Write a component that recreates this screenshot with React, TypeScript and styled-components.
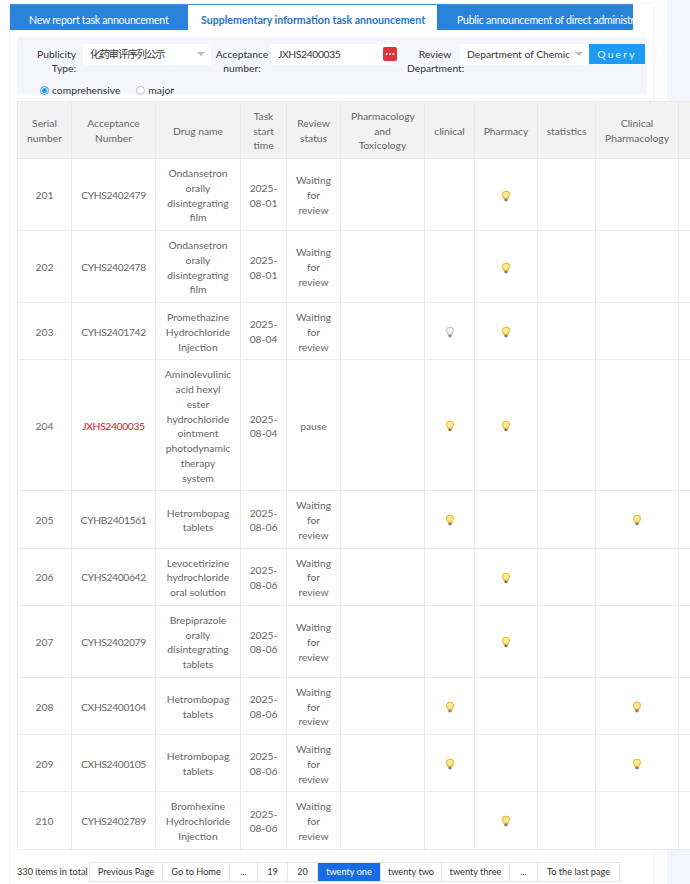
import React from 'react';
import styled, { createGlobalStyle } from 'styled-components';

const FONT = 'Lato, "Noto Sans CJK SC", sans-serif';

const GlobalStyle = createGlobalStyle`
  html, body {
    margin: 0;
    padding: 0;
    background: #fff;
    overflow: hidden;
  }
  * {
    box-sizing: border-box;
  }
`;

const Shell = styled.div`
  display: flex;
  width: 690px;
  height: 884px;
  overflow: hidden;
  font-family: ${FONT};
  font-size: 10.3px;
  color: #666;
`;

const Main = styled.div`
  width: 667px;
  flex: none;
  padding: 3px 13px 0 9px;
`;

const Aside = styled.div`
  flex: 1;
  background: #f1f6fe;
`;

const Card = styled.div`
  height: 881px;
  background: #fff;
  border: 1px solid #f0f3f8;
  border-bottom: none;
`;

const Tabs = styled.div`
  display: flex;
  width: 623px;
  height: 26px;
  border-top: 1px solid #4a90d9;
  background: #2b82d9;
  overflow: hidden;
`;

const Tab = styled.div<{ $active?: boolean; $width: number; $indent: number }>`
  flex: none;
  width: ${(p) => p.$width}px;
  padding-left: ${(p) => p.$indent}px;
  line-height: 30px;
  white-space: nowrap;
  overflow: hidden;
  font-size: 10.6px;
  font-weight: ${(p) => (p.$active ? 700 : 400)};
  letter-spacing: ${(p) => (p.$active ? '0' : '-0.27px')};
  background: ${(p) => (p.$active ? '#fff' : '#2b82d9')};
  color: ${(p) => (p.$active ? '#1c74d4' : '#fff')};
`;

const Filter = styled.div`
  margin: 7px 6px 0 7px;
  height: 57px;
  padding: 7px 2px 0 0;
  background: #f4f6fb;
  color: #333;
`;

const FilterRow = styled.div`
  display: flex;
  align-items: flex-start;
  height: 39px;
`;

const FieldLabel = styled.label<{ $width: number; $gap: number; $center?: boolean }>`
  position: relative;
  z-index: 1;
  flex: none;
  width: ${(p) => p.$width}px;
  margin-right: ${(p) => p.$gap}px;
  text-align: ${(p) => (p.$center ? 'center' : 'right')};
  line-height: 13.5px;
  padding-top: 4px;
`;

const Select = styled.div<{ $width: number }>`
  position: relative;
  flex: none;
  width: ${(p) => p.$width}px;
  height: 21px;
  padding: 0 20px 0 7px;
  background: #fff;
  border-radius: 2px;
  line-height: 21px;
`;

const SelectValue = styled.div`
  white-space: nowrap;
  overflow: hidden;
`;

const SelectArrow = styled.span`
  position: absolute;
  right: 6px;
  top: 8px;
  border-left: 4px solid transparent;
  border-right: 4px solid transparent;
  border-top: 4px solid #bbb;
`;

const CjkValue = styled.span`
  font-size: 10.5px;
  letter-spacing: -1.2px;
`;

const TextInput = styled.div`
  position: relative;
  flex: none;
  width: 129px;
  height: 21px;
  margin-right: 7px;
  padding-left: 7px;
  background: #fff;
  border-radius: 2px;
  line-height: 21px;
  letter-spacing: -0.35px;
`;

const PickerButton = styled.span`
  position: absolute;
  right: 3px;
  top: 3px;
  display: flex;
  align-items: center;
  justify-content: center;
  width: 14px;
  height: 14px;
  border-radius: 2px;
  background: #e0343c;
`;

const QueryButton = styled.button`
  flex: none;
  width: 56px;
  height: 20px;
  padding: 0;
  border: none;
  background: #1d9bf5;
  color: #e8f6ff;
  font-family: ${FONT};
  font-size: 10.3px;
  letter-spacing: 2.2px;
  line-height: 20px;
`;

const Radios = styled.div`
  display: flex;
  align-items: center;
  height: 14px;
  padding-left: 23px;
`;

const RadioOption = styled.span`
  display: flex;
  align-items: center;
  gap: 3px;
  margin-right: 16px;
`;

const RadioMark = styled.span<{ $checked?: boolean }>`
  display: flex;
  align-items: center;
  justify-content: center;
  width: 9px;
  height: 9px;
  border-radius: 50%;
  border: 1px solid ${(p) => (p.$checked ? '#1d9bf5' : '#bbb')};
  background: #fff;

  &::after {
    content: '';
    display: ${(p) => (p.$checked ? 'block' : 'none')};
    width: 5px;
    height: 5px;
    border-radius: 50%;
    background: #1d9bf5;
  }
`;

const TableFrame = styled.table`
  position: relative;
  z-index: 1;
  margin: 7px 0 0 7px;
  width: 760px;
  table-layout: fixed;
  border-collapse: collapse;
  background: #fff;
  text-align: center;
`;

const HeadCell = styled.th<{ $inset: number }>`
  padding: 7px ${(p) => p.$inset}px 5px;
  border: 1px solid #e8e8e8;
  background: #f2f2f2;
  font-weight: 400;
  line-height: 14.67px;
  color: #666;
`;

const Cell = styled.td`
  padding: 7px 8px 5px;
  border: 1px solid #ebebeb;
  line-height: 14.75px;
  color: #666;
  height: 57px;
`;

const AcceptanceNo = styled.span<{ $alert?: boolean }>`
  letter-spacing: -0.35px;
  color: ${(p) => (p.$alert ? '#d9141e' : 'inherit')};
`;

const BulbIcon = styled.svg`
  display: block;
  margin: 0 auto;
`;

const Pager = styled.div`
  display: flex;
  align-items: center;
  margin: 12px 0 0 7px;
  color: #333;
  font-size: 9.2px;
  white-space: nowrap;
`;

const PagerTotal = styled.span`
  width: 73px;
  flex: none;
`;

const PageLink = styled.span<{ $active?: boolean; $width: number }>`
  flex: none;
  width: ${(p) => p.$width}px;
  height: 20px;
  margin-left: -1px;
  line-height: 18px;
  text-align: center;
  border: 1px solid #e5e5e5;
  background: ${(p) => (p.$active ? '#1a6ce6' : '#fff')};
  color: ${(p) => (p.$active ? '#fff' : '#333')};
`;

const Bulb = ({ off }: { off?: boolean }) => (
  <BulbIcon width="8" height="12" viewBox="0 0 9 12">
    <path
      d="M4.5.6A3.9 3.9 0 0 0 .6 4.4c0 1.5.9 2.3 1.5 3.2.3.4.3.8.4 1.1h4c.1-.3.1-.7.4-1.1.6-.9 1.5-1.7 1.5-3.2A3.9 3.9 0 0 0 4.5.6Z"
      fill={off ? '#f2f2f2' : '#fde9a0'}
      stroke={off ? '#c4c4c4' : '#eeb91e'}
      strokeWidth="1.2"
    />
    <rect x="2.8" y="9" width="3.4" height="2.8" rx=".6" fill={off ? '#8a8a8a' : '#7c7c7c'} />
  </BulbIcon>
);

const PickerDots = () => (
  <svg width="10" height="4" viewBox="0 0 10 4">
    <circle cx="1.5" cy="2" r="1" fill="#fff" />
    <circle cx="5" cy="2" r="1" fill="#fff" />
    <circle cx="8.5" cy="2" r="1" fill="#fff" />
  </svg>
);

const COLUMNS = [
  { title: 'Serial number', width: 54, inset: 8 },
  { title: 'Acceptance Number', width: 84, inset: 8 },
  { title: 'Drug name', width: 85, inset: 8 },
  { title: 'Task start time', width: 46, inset: 8 },
  { title: 'Review status', width: 54, inset: 8 },
  { title: 'Pharmacology and Toxicology', width: 84, inset: 10 },
  { title: 'clinical', width: 50, inset: 8 },
  { title: 'Pharmacy', width: 63, inset: 8 },
  { title: 'statistics', width: 58, inset: 8 },
  { title: 'Clinical Pharmacology', width: 83, inset: 8 },
  { title: 'Compliance', width: 99, inset: 8 },
];

type Mark = 'on' | 'off' | undefined;

interface IRow {
  serial: number;
  code: string;
  drug: string;
  date: string;
  status: string;
  alert?: boolean;
  clinical?: Mark;
  pharmacy?: Mark;
  clinicalPharmacology?: Mark;
}

const WAITING = 'Waiting for review';

const ROWS: IRow[] = [
  { serial: 201, code: 'CYHS2402479', drug: 'Ondansetron orally disintegrating film', date: '2025-08-01', status: WAITING, pharmacy: 'on' },
  { serial: 202, code: 'CYHS2402478', drug: 'Ondansetron orally disintegrating film', date: '2025-08-01', status: WAITING, pharmacy: 'on' },
  { serial: 203, code: 'CYHS2401742', drug: 'Promethazine Hydrochloride Injection', date: '2025-08-04', status: WAITING, clinical: 'off', pharmacy: 'on' },
  { serial: 204, code: 'JXHS2400035', drug: 'Aminolevulinic acid hexyl ester hydrochloride ointment photodynamic therapy system', date: '2025-08-04', status: 'pause', alert: true, clinical: 'on', pharmacy: 'on' },
  { serial: 205, code: 'CYHB2401561', drug: 'Hetrombopag tablets', date: '2025-08-06', status: WAITING, clinical: 'on', clinicalPharmacology: 'on' },
  { serial: 206, code: 'CYHS2400642', drug: 'Levocetirizine hydrochloride oral solution', date: '2025-08-06', status: WAITING, pharmacy: 'on' },
  { serial: 207, code: 'CYHS2402079', drug: 'Brepiprazole orally disintegrating tablets', date: '2025-08-06', status: WAITING, pharmacy: 'on' },
  { serial: 208, code: 'CXHS2400104', drug: 'Hetrombopag tablets', date: '2025-08-06', status: WAITING, clinical: 'on', clinicalPharmacology: 'on' },
  { serial: 209, code: 'CXHS2400105', drug: 'Hetrombopag tablets', date: '2025-08-06', status: WAITING, clinical: 'on', clinicalPharmacology: 'on' },
  { serial: 210, code: 'CYHS2402789', drug: 'Bromhexine Hydrochloride Injection', date: '2025-08-06', status: WAITING, pharmacy: 'on' },
];

const PAGES = [
  { label: 'Previous Page', width: 74 },
  { label: 'Go to Home', width: 68 },
  { label: '...', width: 29 },
  { label: '19', width: 31 },
  { label: '20', width: 31 },
  { label: 'twenty one', width: 64, active: true },
  { label: 'twenty two', width: 62 },
  { label: 'twenty three', width: 69 },
  { label: '...', width: 29 },
  { label: 'To the last page', width: 83 },
];

const renderMark = (mark: Mark) => (mark ? <Bulb off={mark === 'off'} /> : null);

const App = () => {
  return (
    <Shell>
      <GlobalStyle />
      <Main>
        <Card>
          <Tabs>
            <Tab $width={178} $indent={19}>New report task announcement</Tab>
            <Tab $width={249} $indent={13} $active>Supplementary information task announcement</Tab>
            <Tab $width={196} $indent={20}>Public announcement of direct administration</Tab>
          </Tabs>
          <Filter>
            <FilterRow>
              <FieldLabel $width={59} $gap={7}>Publicity Type:</FieldLabel>
              <Select $width={128}>
                <SelectValue>
                  <CjkValue>化药审评序列公示</CjkValue>
                </SelectValue>
                <SelectArrow />
              </Select>
              <FieldLabel $width={62} $gap={-2} $center>Acceptance number:</FieldLabel>
              <TextInput>
                JXHS2400035
                <PickerButton>
                  <PickerDots />
                </PickerButton>
              </TextInput>
              <FieldLabel $width={56} $gap={-3} $center>Review Department:</FieldLabel>
              <Select $width={129}>
                <SelectValue>Department of Chemical Drugs</SelectValue>
                <SelectArrow />
              </Select>
              <QueryButton>Query</QueryButton>
            </FilterRow>
            <Radios>
              <RadioOption>
                <RadioMark $checked />
                comprehensive
              </RadioOption>
              <RadioOption>
                <RadioMark />
                major
              </RadioOption>
            </Radios>
          </Filter>
          <TableFrame>
            <colgroup>
              {COLUMNS.map((column) => (
                <col key={column.title} width={column.width} />
              ))}
            </colgroup>
            <thead>
              <tr>
                {COLUMNS.map((column) => (
                  <HeadCell key={column.title} $inset={column.inset}>{column.title}</HeadCell>
                ))}
              </tr>
            </thead>
            <tbody>
              {ROWS.map((row) => (
                <tr key={row.serial}>
                  <Cell>{row.serial}</Cell>
                  <Cell>
                    <AcceptanceNo $alert={row.alert}>{row.code}</AcceptanceNo>
                  </Cell>
                  <Cell>{row.drug}</Cell>
                  <Cell>{row.date}</Cell>
                  <Cell>{row.status}</Cell>
                  <Cell />
                  <Cell>{renderMark(row.clinical)}</Cell>
                  <Cell>{renderMark(row.pharmacy)}</Cell>
                  <Cell />
                  <Cell>{renderMark(row.clinicalPharmacology)}</Cell>
                  <Cell />
                </tr>
              ))}
            </tbody>
          </TableFrame>
          <Pager>
            <PagerTotal>330 items in total</PagerTotal>
            {PAGES.map((page, index) => (
              <PageLink key={`page-${index}`} $width={page.width} $active={page.active}>
                {page.label}
              </PageLink>
            ))}
          </Pager>
        </Card>
      </Main>
      <Aside />
    </Shell>
  );
};

export default App;
